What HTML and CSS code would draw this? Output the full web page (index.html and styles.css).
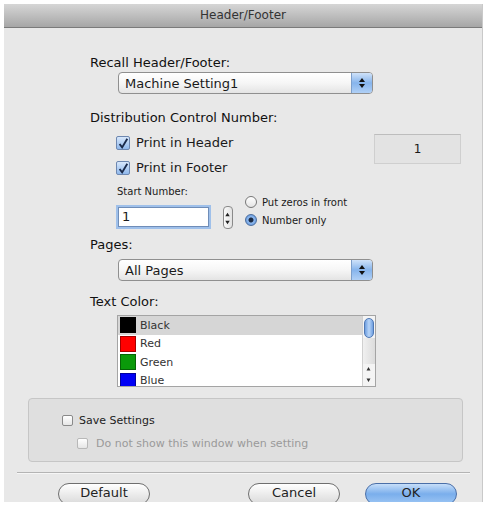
FILE: index.html
```html
<!DOCTYPE html>
<html lang="en">
<head>
    <meta charset="UTF-8">
    <title>Header/Footer</title>
    <link rel="stylesheet" href="styles.css">
</head>
<body>
    <div class="window">
        <div class="titlebar">Header/Footer</div>

        <div class="content">
            <div class="label">Recall Header/Footer:</div>
            <div class="popup">
                <span class="popup-text">Machine Setting1</span>
                <span class="popup-arrows">
                    <svg width="8" height="12" viewBox="0 0 8 12"><path d="M4 1 L7 5 L1 5 Z M4 11 L7 7 L1 7 Z" fill="#111"/></svg>
                </span>
            </div>

            <div class="label label-dcn">Distribution Control Number:</div>
            <div class="dcn">
                <div class="dcn-left">
                    <div class="check">
                        <span class="box checked">
                            <svg width="14" height="14" viewBox="0 0 14 14"><path d="M3 7 L6 11 L12 1" stroke="#1a2a4a" stroke-width="2.2" fill="none"/></svg>
                        </span>
                        Print in Header
                    </div>
                    <div class="check">
                        <span class="box checked">
                            <svg width="14" height="14" viewBox="0 0 14 14"><path d="M3 7 L6 11 L12 1" stroke="#1a2a4a" stroke-width="2.2" fill="none"/></svg>
                        </span>
                        Print in Footer
                    </div>
                    <div class="start-row">
                        <div class="start-col">
                            <div class="small-label">Start Number:</div>
                            <div class="field">1</div>
                        </div>
                        <div class="stepper">
                            <svg width="10" height="23" viewBox="0 0 10 23"><path d="M5 5 L7.5 9 L2.5 9 Z M5 18 L7.5 14 L2.5 14 Z" fill="#222"/></svg>
                        </div>
                        <div class="radios">
                            <div class="radio"><span class="dot"></span>Put zeros in front</div>
                            <div class="radio"><span class="dot on"></span>Number only</div>
                        </div>
                    </div>
                </div>
                <div class="counter">1</div>
            </div>

            <div class="label label-pages">Pages:</div>
            <div class="popup popup-pages">
                <span class="popup-text">All Pages</span>
                <span class="popup-arrows">
                    <svg width="8" height="12" viewBox="0 0 8 12"><path d="M4 1 L7 5 L1 5 Z M4 11 L7 7 L1 7 Z" fill="#111"/></svg>
                </span>
            </div>

            <div class="label label-color">Text Color:</div>
            <div class="list">
                <div class="rows">
                    <div class="row selected"><span class="swatch" style="background: #000;"></span>Black</div>
                    <div class="row"><span class="swatch" style="background: #f00;"></span>Red</div>
                    <div class="row"><span class="swatch" style="background: #0a9a0a;"></span>Green</div>
                    <div class="row"><span class="swatch" style="background: #0000f5;"></span>Blue</div>
                </div>
                <div class="scrollbar">
                    <div class="thumb"></div>
                    <div class="track"></div>
                    <svg width="11" height="22" viewBox="0 0 11 22"><path d="M5.5 3 L7.5 6.5 L3.5 6.5 Z M5.5 18 L7.5 14.5 L3.5 14.5 Z" fill="#333"/></svg>
                </div>
            </div>
        </div>

        <div class="group">
            <div class="save-row">
                <span class="small-box"></span>Save Settings
            </div>
            <div class="save-row disabled">
                <span class="small-box"></span>Do not show this window when setting
            </div>
        </div>

        <div class="separator"></div>

        <div class="buttons">
            <div class="btn btn-default">Default</div>
            <div class="btn btn-cancel">Cancel</div>
            <div class="btn btn-ok">OK</div>
        </div>
    </div>
</body>
</html>
```

FILE: styles.css
```css
body {
    margin: 0;
    background: #fff;
    font-family: "DejaVu Sans", "Liberation Sans", sans-serif;
    color: #1a1a1a;
}

.window {
    margin: 4px 0 0 4px;
    width: 479px;
    height: 498px;
    box-sizing: border-box;
    background: #e8e8e8;
    border-right: 1px solid #c9c9c9;
    overflow: hidden;
}

.titlebar {
    height: 23px;
    line-height: 23px;
    text-align: center;
    font-size: 12px;
    color: #333;
    background: linear-gradient(#d6d6d6, #a6a6a6);
    border-bottom: 1px solid #7a7a7a;
}

.content {
    padding: 27px 0 0 86px;
}

.label {
    font-size: 13px;
    line-height: 16px;
    color: #111;
}

.label-dcn {
    margin-top: 16px;
}

.label-pages {
    margin-top: 8px;
}

.label-color {
    margin-top: 13px;
}

/* popup buttons */
.popup {
    margin: 1px 0 0 28px;
    width: 255px;
    height: 22px;
    box-sizing: border-box;
    display: flex;
    align-items: center;
    font-size: 13px;
    border: 1px solid #8f8f8f;
    border-radius: 4px;
    background: linear-gradient(#ffffff, #f6f6f6 50%, #e4e4e4);
}

.popup-pages {
    margin-top: 6px;
}

.popup-text {
    flex: 1;
    padding-left: 6px;
}

.popup-arrows {
    width: 20px;
    height: 100%;
    display: flex;
    align-items: center;
    justify-content: center;
    border-left: 1px solid #7d9fcb;
    border-radius: 0 3px 3px 0;
    background: linear-gradient(#cfe2f9, #86b4ec 50%, #b0d0f6);
}

/* distribution control number */
.dcn {
    display: flex;
    justify-content: space-between;
    margin-top: 4px;
    padding-right: 21px;
}

.dcn-left {
    margin-left: 26px;
}

.check {
    display: flex;
    align-items: center;
    gap: 6px;
    height: 25px;
    font-size: 13px;
}

.box {
    width: 14px;
    height: 14px;
    box-sizing: border-box;
    border: 1px solid #6d87b0;
    border-radius: 2px;
    background: linear-gradient(#d7e7fb, #8fb8ec);
    display: flex;
}

.counter {
    margin-top: 4px;
    width: 87px;
    height: 30px;
    box-sizing: border-box;
    border: 1px solid #cfcfcf;
    border-top-color: #bdbdbd;
    background: #e3e3e3;
    text-align: center;
    line-height: 28px;
    font-size: 12px;
}

.start-row {
    display: flex;
    align-items: flex-end;
    margin-top: 5px;
}

.small-label {
    font-size: 10px;
    line-height: 14px;
    margin-left: 1px;
}

.field {
    margin: 8px 2px 2px 2px;
    width: 91px;
    height: 20px;
    box-sizing: border-box;
    border: 1px solid #6f8db8;
    box-shadow: 0 0 0 2px #9fc0ea;
    background: #fff;
    font-size: 13px;
    line-height: 18px;
    padding-left: 3px;
}

.stepper {
    margin-left: 12px;
    width: 10px;
    height: 23px;
    box-sizing: border-box;
    border: 1px solid #8a8a8a;
    border-radius: 4px;
    background: linear-gradient(90deg, #fafafa, #e2e2e2);
    display: flex;
}

.stepper svg {
    margin-left: -1px;
}

.radios {
    margin-left: 12px;
}

.radio {
    display: flex;
    align-items: center;
    gap: 5px;
    height: 18px;
    font-size: 10px;
}

.dot {
    width: 12px;
    height: 12px;
    box-sizing: border-box;
    border-radius: 50%;
    border: 1px solid #777;
    background: linear-gradient(#fff, #e4e4e4);
}

.dot.on {
    border-color: #4d6f9e;
    background: radial-gradient(circle, #1b2b45 0 2px, #8fbaf0 3px, #5f92d8 6px);
}

/* text color list */
.list {
    margin: 5px 0 0 27px;
    width: 259px;
    height: 72px;
    box-sizing: border-box;
    border: 1px solid #a4a4a4;
    background: #fff;
    display: flex;
    overflow: hidden;
}

.rows {
    flex: 1;
}

.row {
    display: flex;
    align-items: center;
    gap: 4px;
    height: 18.5px;
    padding-left: 2px;
    font-size: 11px;
    color: #333;
}

.row.selected {
    background: #d6d6d6;
}

.swatch {
    width: 16px;
    height: 16px;
    box-sizing: border-box;
    border: 1px solid rgba(0, 0, 0, 0.35);
}

.scrollbar {
    width: 12px;
    display: flex;
    flex-direction: column;
    border-left: 1px solid #d0d0d0;
    background: #f4f4f4;
}

.thumb {
    margin: 2px 1px 0 1px;
    height: 18px;
    border-radius: 5px;
    border: 1px solid #4f78b4;
    background: linear-gradient(90deg, #6f9fe0, #b8d5f8, #6f9fe0);
}

.track {
    flex: 1;
    background: linear-gradient(90deg, #f0f0f0, #dcdcdc);
}

/* save settings group */
.group {
    margin: 11px 0 0 24px;
    width: 435px;
    height: 64px;
    box-sizing: border-box;
    padding: 12px 0 0 33px;
    background: #dfdfdf;
    border: 1px solid #c6c6c6;
    border-radius: 4px;
}

.save-row {
    display: flex;
    align-items: center;
    gap: 6px;
    height: 18px;
    font-size: 11px;
    color: #222;
}

.save-row.disabled {
    margin: 5px 0 0 15px;
    color: #9a9a9a;
    gap: 8px;
}

.small-box {
    width: 11px;
    height: 11px;
    box-sizing: border-box;
    border: 1px solid #8a8a8a;
    border-radius: 2px;
    background: linear-gradient(#fff, #e6e6e6);
}

.disabled .small-box {
    border-color: #b8b8b8;
}

.separator {
    margin: 10px 0 0 13px;
    width: 453px;
    border-top: 1px solid #b4b4b4;
    border-bottom: 1px solid #f6f6f6;
}

.buttons {
    display: flex;
    margin-top: 9px;
}

.btn {
    width: 92px;
    height: 22px;
    box-sizing: border-box;
    border: 1px solid #6f6f6f;
    border-radius: 11px;
    background: linear-gradient(#ffffff, #ececec 50%, #dadada);
    text-align: center;
    font-size: 13px;
    line-height: 18px;
    color: #222;
}

.btn-default {
    margin-left: 54px;
}

.btn-cancel {
    margin-left: 98px;
}

.btn-ok {
    margin-left: 25px;
    border-color: #4a6fa8;
    background: linear-gradient(#c6def9, #7aaeec 50%, #9cc6f4);
}
```
